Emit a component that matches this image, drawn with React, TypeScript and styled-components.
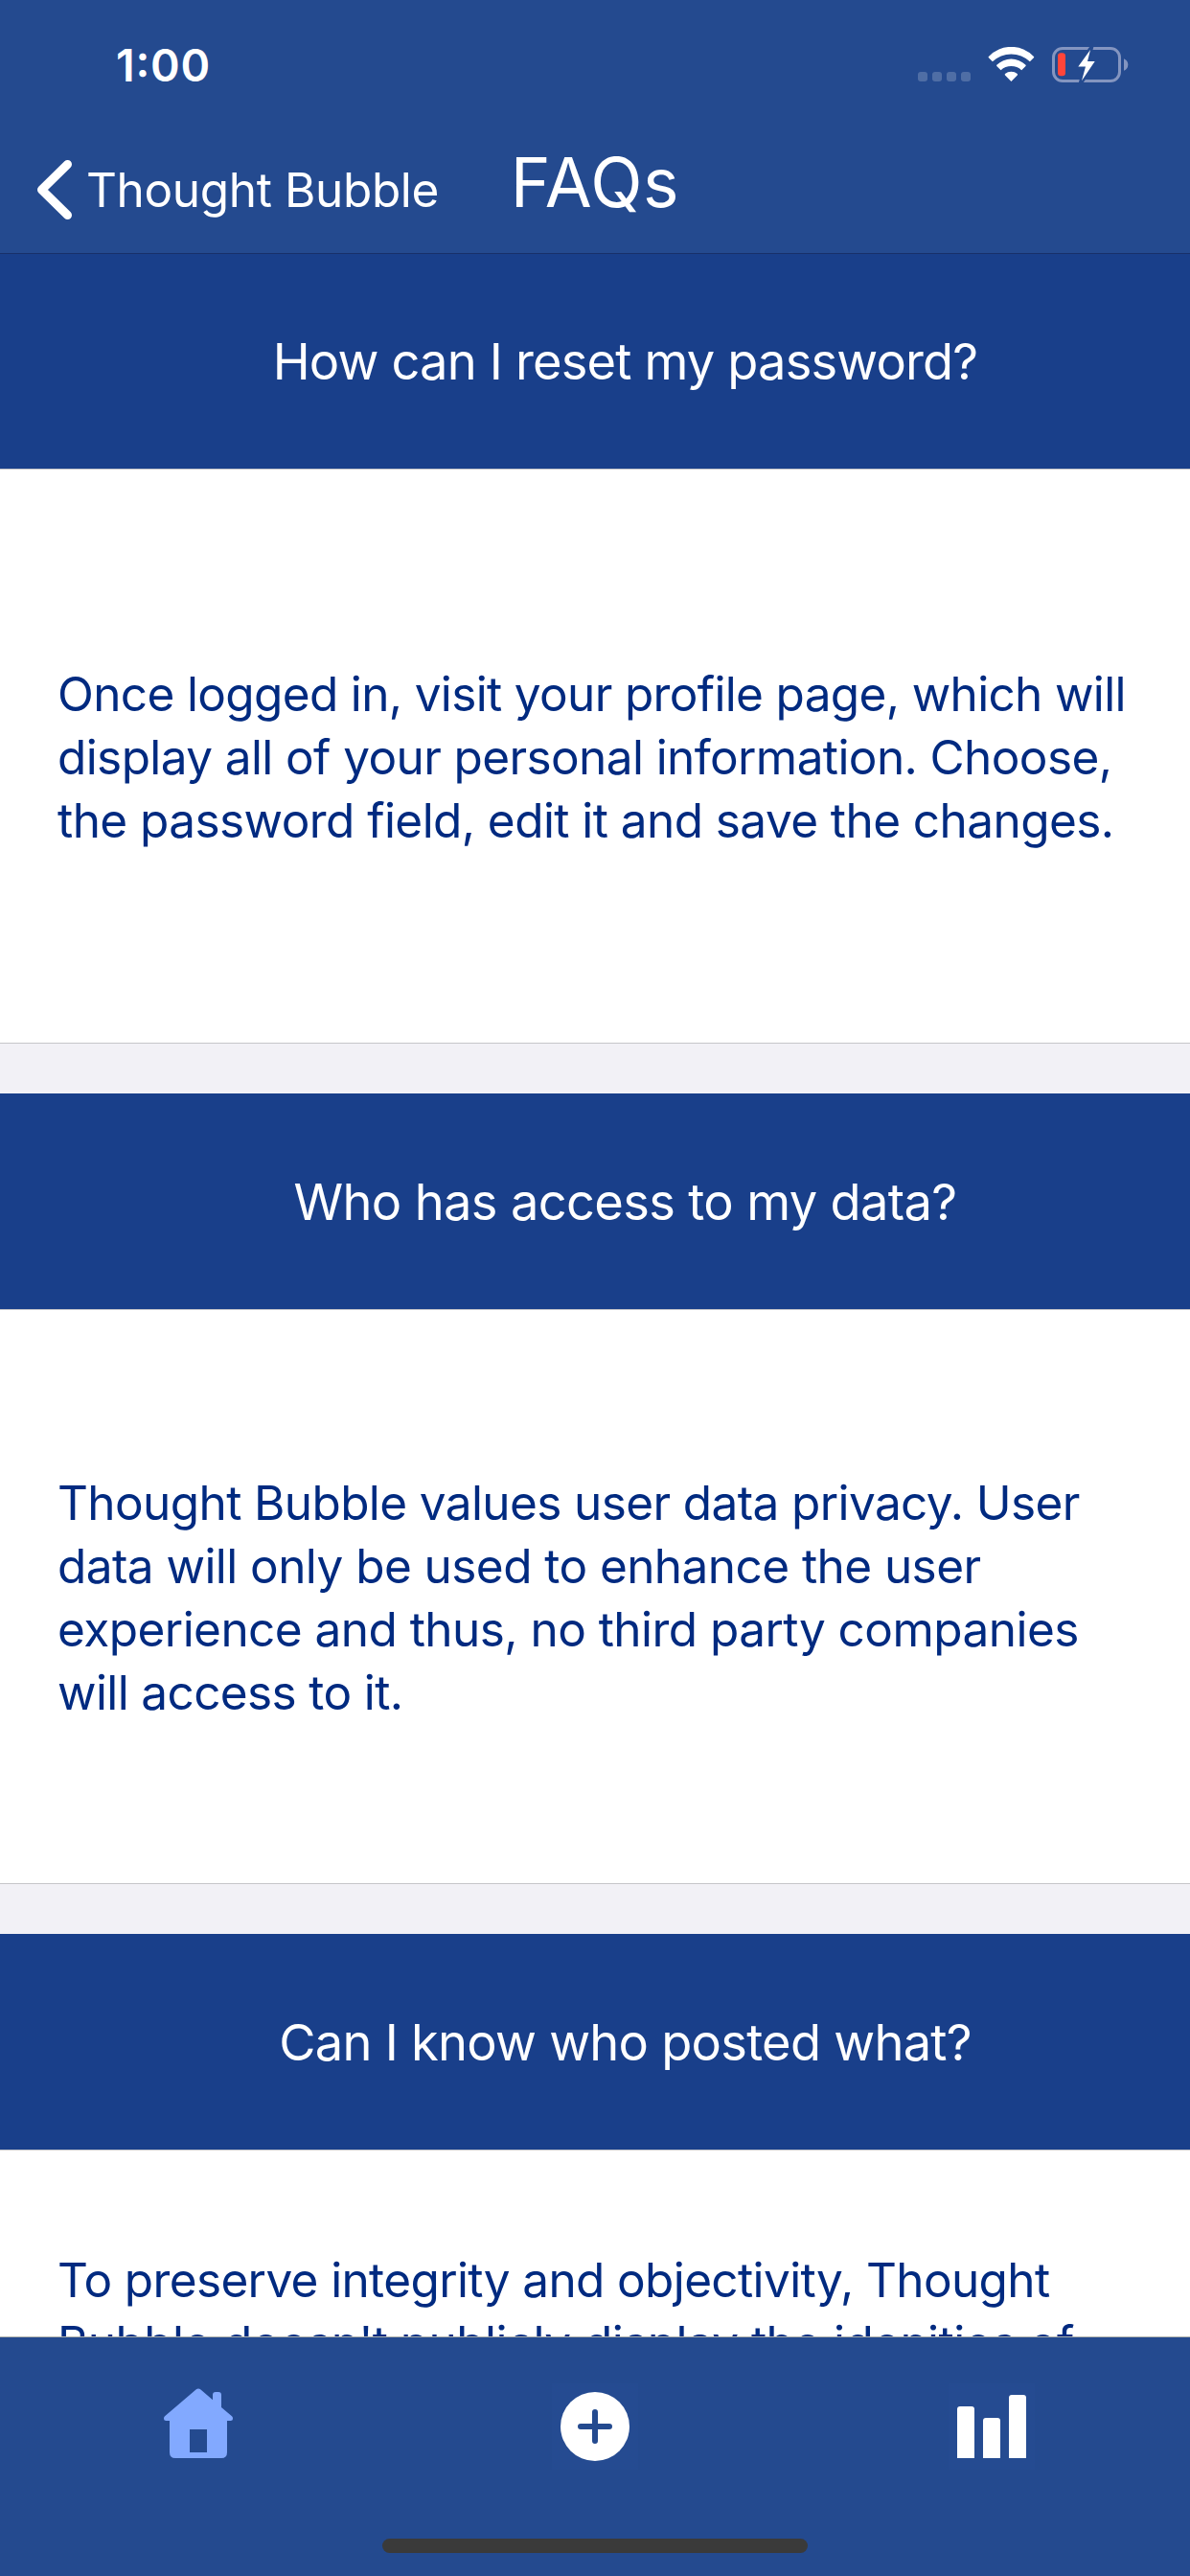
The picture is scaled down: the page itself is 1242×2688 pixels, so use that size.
import React from "react";
import styled, { createGlobalStyle } from "styled-components";

const colors = {
  bar: "#244a8f",
  header: "#193f8a",
  text: "#002a80",
  gap: "#f2f1f6",
  separator: "#c6c6c9",
  active: "#82a9ff",
};

const GlobalStyle = createGlobalStyle`
  body {
    margin: 0;
    background: ${colors.bar};
    font-family: Inter, "Liberation Sans", sans-serif;
  }
`;

const Screen = styled.div`
  display: flex;
  flex-direction: column;
  width: 1242px;
  height: 2688px;
  overflow: hidden;
  background: #fff;
`;

const TopBar = styled.header`
  position: relative;
  z-index: 1;
  flex: none;
  height: 264px;
  background: ${colors.bar};
  box-shadow: 0 1px 0 #18306a;
  color: #fff;
`;

const StatusBar = styled.div`
  display: flex;
  justify-content: space-between;
  align-items: flex-start;
  box-sizing: border-box;
  height: 132px;
  padding: 49px 64px 0 121px;
`;

const Clock = styled.span`
  font-size: 46.5px;
  font-weight: 600;
  line-height: 38px;
  letter-spacing: 0.8px;
  font-feature-settings: "case" 1;
`;

const StatusIcons = styled.div`
  display: flex;
  gap: 18px;

  svg {
    display: block;
  }
`;

const NavBar = styled.nav`
  display: grid;
  grid-template-columns: 1fr auto 1fr;
  align-items: center;
  height: 132px;
`;

const BackButton = styled.a`
  display: flex;
  align-items: center;
  gap: 14px;
  padding-left: 37px;
  font-size: 49.5px;
  line-height: 66px;
  letter-spacing: -0.36px;
  white-space: nowrap;
`;

const Title = styled.h1`
  margin: 0;
  padding-bottom: 16px;
  font-size: 71px;
  font-weight: 400;
  line-height: 86px;
  letter-spacing: 0.7px;
`;

const Content = styled.main`
  flex: 1;
  min-height: 0;
  overflow: hidden;
`;

const Section = styled.section`
  display: flex;
  flex-direction: column;
  height: 825px;
  margin-bottom: 52px;
`;

const Question = styled.h2<{ $spacing: number }>`
  display: flex;
  align-items: center;
  justify-content: center;
  box-sizing: border-box;
  flex: none;
  height: 225px;
  margin: 0;
  padding-left: 63px;
  background: ${colors.header};
  color: #fff;
  font-size: 52.4px;
  font-weight: 400;
  letter-spacing: ${(p) => p.$spacing}px;
`;

const Answer = styled.div<{ $top: number }>`
  flex: 1;
  padding: ${(p) => p.$top}px 0 0 60px;
  border-top: 1px solid ${colors.separator};
  border-bottom: 1px solid ${colors.separator};
  background: #fff;
  color: ${colors.text};
`;

const List = styled.div`
  background: ${colors.gap};
`;

const Line = styled.span<{ $spacing: number }>`
  display: block;
  font-size: 49.5px;
  line-height: 66px;
  letter-spacing: ${(p) => p.$spacing}px;
  white-space: nowrap;
`;

const BottomBar = styled.footer`
  display: flex;
  flex-direction: column;
  align-items: center;
  justify-content: space-between;
  box-sizing: border-box;
  flex: none;
  height: 250px;
  padding: 48px 0 24px;
  border-top: 1px solid #aeb0ac;
  background: ${colors.bar};
`;

const Tabs = styled.div`
  display: grid;
  grid-template-columns: repeat(3, 1fr);
  justify-items: center;
  width: 100%;
`;

const Tab = styled.div<{ $active?: boolean }>`
  width: 90px;
  height: 90px;
  background: ${(p) => (p.$active ? "transparent" : "#254b91")};
  color: ${(p) => (p.$active ? colors.active : "#fff")};

  svg {
    display: block;
  }
`;

const HomeIndicator = styled.div`
  width: 444px;
  height: 15px;
  border-radius: 7.5px;
  background: #3a3a3a;
`;

const SignalIcon = () => (
  <svg width="55" height="37" viewBox="0 0 55 37" fill="#fff" fillOpacity="0.2">
    {[0, 15, 30, 45].map((x) => (
      <rect key={x} x={x} y="26" width="10" height="10" rx="3" />
    ))}
  </svg>
);

const WifiIcon = () => (
  <svg width="49" height="37" viewBox="0 0 49 37" fill="#fff">
    <path d="M.9 9.9A32.500 32.500 0 0 1 47.900 9.900Q48.600 10.600 47.900 11.300L43.900 15.300A28 28 0 0 0 4.900 15.300L.9 11.300Q.2 10.600 .9 9.900Z" />
    <path d="M9.300 18.700A21.800 21.800 0 0 1 39.500 18.700Q40 19.300 39.500 19.900L35.200 24.200A16 16 0 0 0 13.600 24.200L9.300 19.900Q8.800 19.300 9.300 18.700Z" />
    <path d="M18 28.100A9.600 9.600 0 0 1 30.800 28.100Q31.400 28.800 30.800 29.400L24.400 36L18 29.400Q17.400 28.800 18 28.100Z" />
  </svg>
);

const bolt = "M40 3L27.300 20.600H35L31 35.200L44.700 14.900H37Z";

const BatteryIcon = () => (
  <svg width="80" height="38" viewBox="0 0 80 38">
    <g stroke="#8495c0" fill="none">
      <rect x="1.500" y="1.500" width="69" height="34" rx="9.500" strokeWidth="3" />
    </g>
    <path d="M75 12.200Q79.300 14.200 79.300 18.500Q79.300 22.800 75 24.800Z" fill="#8495c0" />
    <rect x="6" y="6.300" width="8" height="24" rx="3.200" fill="#ff453a" />
    <path d={bolt} fill={colors.bar} stroke={colors.bar} strokeWidth="5" strokeMiterlimit="10" />
    <path d={bolt} fill="#fff" />
  </svg>
);

const ChevronIcon = () => (
  <svg width="39" height="64" viewBox="0 0 39 64" fill="none">
    <path
      d="M33.500 5.500L6.500 32L33.500 58.500"
      stroke="#fff"
      strokeWidth="9"
      strokeLinecap="round"
      strokeLinejoin="round"
    />
  </svg>
);

const HomeIcon = () => (
  <svg width="90" height="90" viewBox="0 0 90 90" fill="currentColor">
    <path
      fillRule="evenodd"
      d="M42.500 6.600Q45 4.600 47.500 6.600L60 17.300V12Q60 9 63 9H66Q69 9 69 12V25L80 34.300Q81 35.300 81 36.500Q81 39 78.500 39H75V72Q75 78 69 78H21Q15 78 15 72V39H11.500Q9 39 9 36.500Q9 35.300 10 34.300ZM36 48V72H54V48Z"
    />
  </svg>
);

const AddIcon = () => (
  <svg width="90" height="90" viewBox="0 0 90 90">
    <circle cx="45" cy="45" r="36" fill="#fff" />
    <path d="M45 30V60M30 45H60" stroke={colors.bar} strokeWidth="6" strokeLinecap="round" />
  </svg>
);

const ChartIcon = () => (
  <svg width="90" height="90" viewBox="0 0 90 90" fill="currentColor">
    <path d="M9 78V27Q9 24 12 24H24Q27 24 27 27V78Z" />
    <path d="M36 78V39Q36 36 39 36H51Q54 36 54 39V78Z" />
    <path d="M63 78V15Q63 12 66 12H78Q81 12 81 15V78Z" />
  </svg>
);

type TextLine = { text: string; spacing: number };
type Faq = { question: string; spacing: number; top: number; lines: TextLine[] };

const faqs: Faq[] = [
  {
    question: "How can I reset my password?",
    spacing: -0.82,
    top: 201,
    lines: [
      { text: "Once logged in, visit your profile page, which will", spacing: -0.65 },
      { text: "display all of your personal information. Choose,", spacing: -0.6 },
      { text: "the password field, edit it and save the changes.", spacing: -0.56 },
    ],
  },
  {
    question: "Who has access to my data?",
    spacing: -0.64,
    top: 168,
    lines: [
      { text: "Thought Bubble values user data privacy. User", spacing: -0.61 },
      { text: "data will only be used to enhance the user", spacing: -0.56 },
      { text: "experience and thus, no third party companies", spacing: -0.54 },
      { text: "will access to it.", spacing: -0.62 },
    ],
  },
  {
    question: "Can I know who posted what?",
    spacing: -0.73,
    top: 102,
    lines: [
      { text: "To preserve integrity and objectivity, Thought", spacing: -0.63 },
      { text: "Bubble doesn't publicly display the idenities of", spacing: -0.56 },
    ],
  },
];

export default function App() {
  return (
    <>
      <GlobalStyle />
      <Screen>
        <TopBar>
          <StatusBar>
            <Clock>1:00</Clock>
            <StatusIcons>
              <SignalIcon />
              <WifiIcon />
              <BatteryIcon />
            </StatusIcons>
          </StatusBar>
          <NavBar>
            <BackButton>
              <ChevronIcon />
              Thought Bubble
            </BackButton>
            <Title>FAQs</Title>
          </NavBar>
        </TopBar>
        <Content>
          <List>
            {faqs.map((faq) => (
              <Section key={faq.question}>
                <Question $spacing={faq.spacing}>{faq.question}</Question>
                <Answer $top={faq.top}>
                  {faq.lines.map((line) => (
                    <Line key={line.text} $spacing={line.spacing}>
                      {line.text}
                    </Line>
                  ))}
                </Answer>
              </Section>
            ))}
          </List>
        </Content>
        <BottomBar>
          <Tabs>
            <Tab $active>
              <HomeIcon />
            </Tab>
            <Tab>
              <AddIcon />
            </Tab>
            <Tab>
              <ChartIcon />
            </Tab>
          </Tabs>
          <HomeIndicator />
        </BottomBar>
      </Screen>
    </>
  );
}
